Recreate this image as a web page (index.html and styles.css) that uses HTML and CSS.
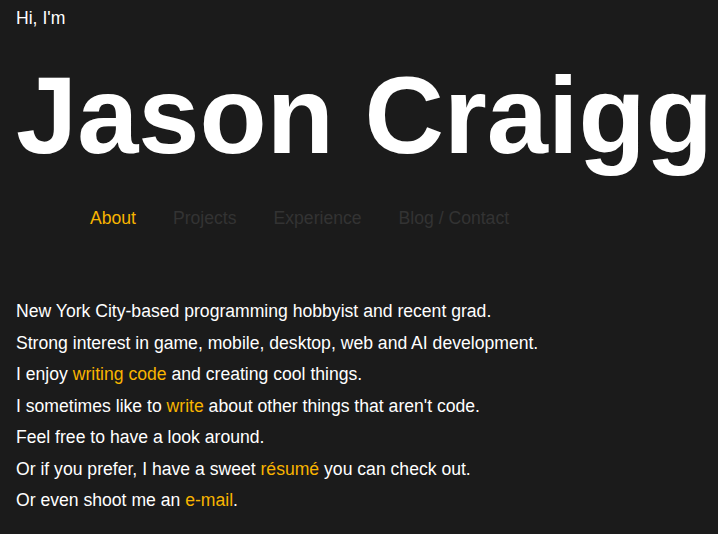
FILE: index.html
```html
<!DOCTYPE html>
<html lang="en">
<head>
<meta charset="utf-8">
<title>Jason Craigg</title>
<link rel="stylesheet" href="styles.css">
</head>
<body>
<div class="page">
  <header class="hero">
    <div class="intro">Hi, I'm</div>
    <h1 class="name">Jason Craigg</h1>
  </header>
  <nav class="nav">
    <a class="nav-link active" href="#">About</a>
    <a class="nav-link" href="#">Projects</a>
    <a class="nav-link" href="#">Experience</a>
    <a class="nav-link" href="#">Blog / Contact</a>
  </nav>
  <section class="about">
    <p class="line">New York City-based programming hobbyist and recent grad.</p>
    <p class="line">Strong interest in game, mobile, desktop, web and AI development.</p>
    <p class="line">I enjoy <a class="hl" href="#">writing code</a> and creating cool things.</p>
    <p class="line">I sometimes like to <a class="hl" href="#">write</a> about other things that aren't code.</p>
    <p class="line">Feel free to have a look around.</p>
    <p class="line">Or if you prefer, I have a sweet <a class="hl" href="#">résumé</a> you can check out.</p>
    <p class="line">Or even shoot me an <a class="hl" href="#">e-mail</a>.</p>
  </section>
</div>
</body>
</html>
```

FILE: styles.css
```css
html, body {
  margin: 0;
  padding: 0;
  background: #1b1b1b;
  overflow: hidden;
}

body {
  font-family: "Liberation Sans", Arial, sans-serif;
  color: #ffffff;
  font-size: 17.6px;
}

.page {
  padding: 8px 16px 0;
}

.intro {
  line-height: 20px;
}

.name {
  margin: 32px 0 0;
  font-size: 110px;
  line-height: 110px;
  font-weight: bold;
  white-space: nowrap;
  letter-spacing: 0;
}

.nav {
  display: flex;
  gap: 37px;
  margin-top: 38px;
  padding-left: 74px;
  line-height: 20px;
}

.nav-link {
  color: #333333;
  text-decoration: none;
}

.nav-link.active {
  color: #f8b400;
}

.about {
  margin-top: 68px;
}

.line {
  margin: 0;
  line-height: 31.5px;
}

.hl {
  color: #f8b400;
  text-decoration: none;
}
```
